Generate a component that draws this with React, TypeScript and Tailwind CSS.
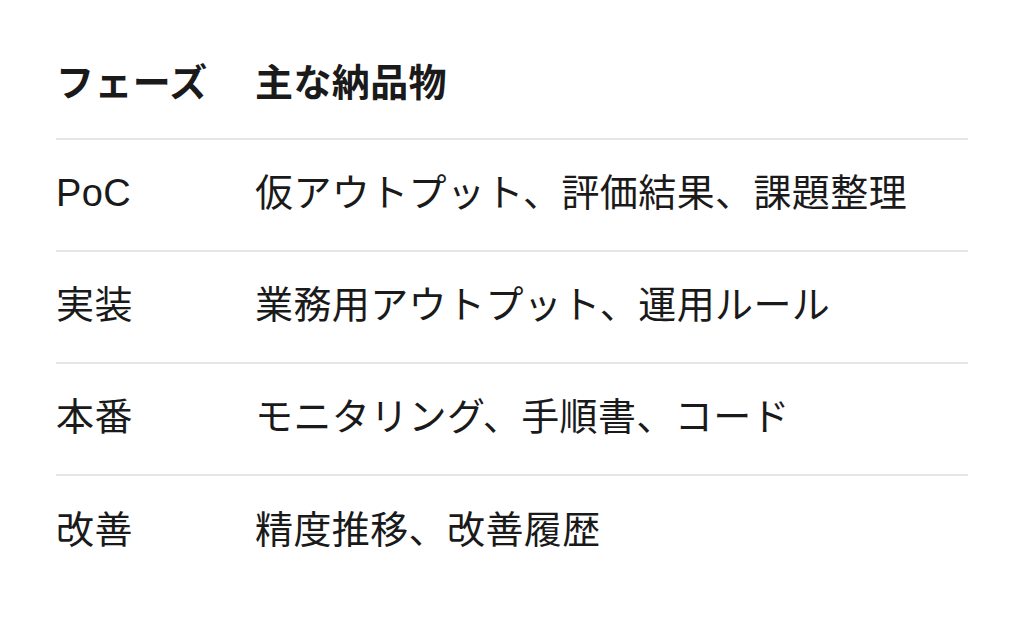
const rows = [
  { phase: "PoC", items: "仮アウトプット、評価結果、課題整理" },
  { phase: "実装", items: "業務用アウトプット、運用ルール" },
  { phase: "本番", items: "モニタリング、手順書、コード" },
  { phase: "改善", items: "精度推移、改善履歴" },
];

export default function App() {
  return (
    <div
      className="min-h-[621px] w-[1024px] bg-white pt-[27px] pl-[56px] text-[#1a1a1a]"
      style={{ fontFamily: '"Liberation Sans", "Noto Sans CJK JP", sans-serif' }}
    >
      <table className="w-[912px] border-collapse text-[38px] leading-none tracking-[0.4px]">
        <thead>
          <tr className="border-b-2 border-[#e6e6e6]">
            <th className="h-[112px] w-[199px] p-0 text-left align-middle font-bold">フェーズ</th>
            <th className="h-[112px] p-0 text-left align-middle font-bold">主な納品物</th>
          </tr>
        </thead>
        <tbody>
          {rows.map((r, i) => (
            <tr key={r.phase} className={i < rows.length - 1 ? "border-b-2 border-[#e6e6e6]" : ""}>
              <td className="h-[112px] p-0 pb-[4px] align-middle font-normal">{r.phase}</td>
              <td className="h-[112px] p-0 pb-[4px] align-middle font-normal">{r.items}</td>
            </tr>
          ))}
        </tbody>
      </table>
    </div>
  );
}
